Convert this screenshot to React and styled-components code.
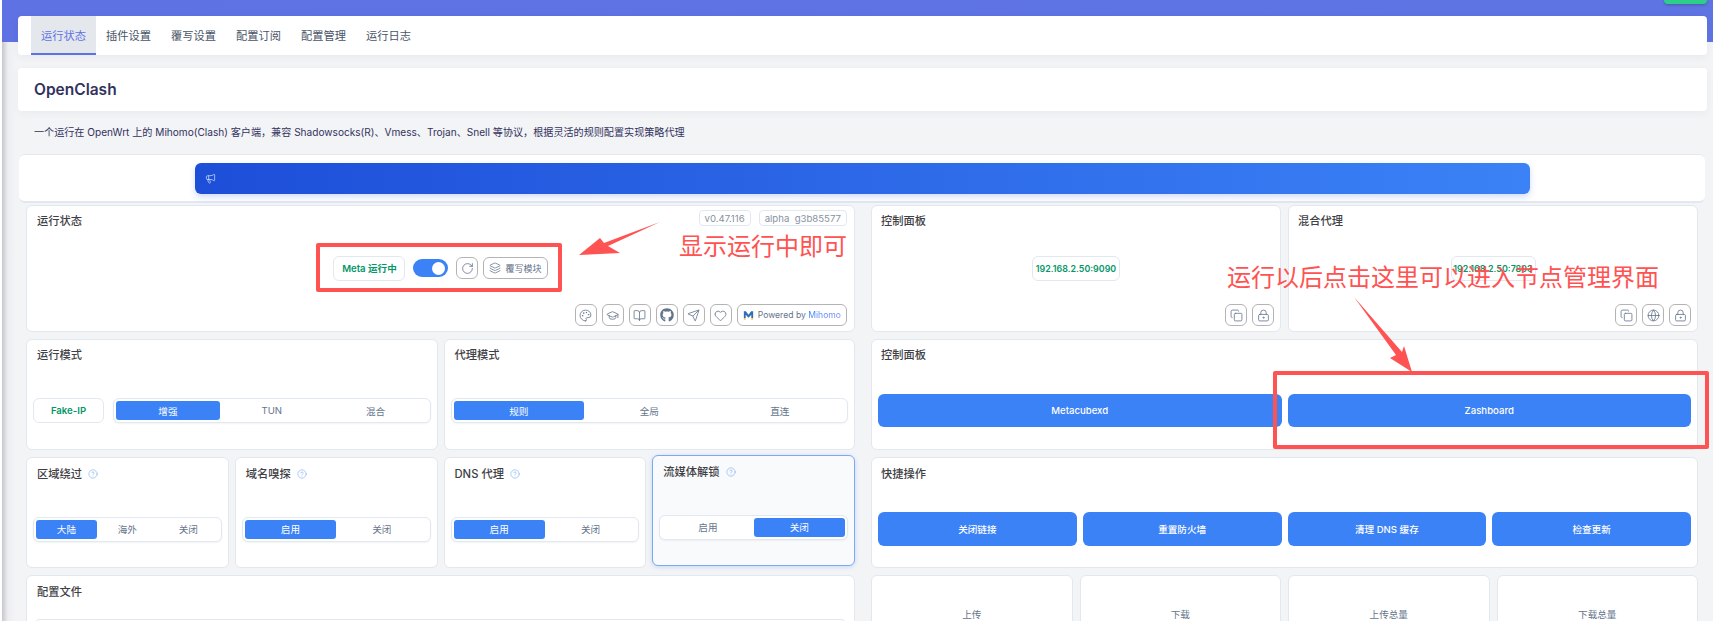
import React from "react";
import styled, { createGlobalStyle } from "styled-components";
import {
  Palette, GraduationCap, BookOpen, Send, Heart, Copy, LockKeyhole, Globe,
  RotateCw, Layers, Megaphone, CircleHelp,
} from "lucide-react";
import { FaGithub } from "react-icons/fa";

const GlobalStyle = createGlobalStyle`
  html, body {
    margin: 0;
    background: #fff;
    overflow: hidden;
  }
  * {
    box-sizing: border-box;
  }
  body {
    font-family: Inter, "Noto Sans CJK SC", sans-serif;
  }
`;

const Page = styled.div`
  position: relative;
  height: 621px;
  margin-left: 2px;
  padding: 16px 6px 0 16px;
  overflow: hidden;
  background:
    linear-gradient(90deg, #5e72e4, #5f74e3) 0 0 / 100% 42px no-repeat,
    linear-gradient(90deg, #c6c8cd 0, #eceef1 6px, #f3f4f6 14px);
`;

const CornerButton = styled.div`
  position: absolute;
  top: 0;
  right: 6px;
  width: 43px;
  height: 4px;
  background: #2dce89;
  border-radius: 0 0 4px 4px;
  box-shadow: 0 1px 3px rgba(0, 0, 0, 0.25);
`;

const Nav = styled.nav`
  display: flex;
  height: 39px;
  padding-left: 13px;
  background: #fff;
  border-radius: 4px;
  box-shadow: 0 2px 8px rgba(50, 50, 93, 0.06);
`;

const Tab = styled.div`
  display: flex;
  align-items: center;
  justify-content: center;
  width: 65px;
  font-size: 11.25px;
  color: ${(p) => (p.$active ? "#5e72e4" : "#4a5568")};
  background: ${(p) => (p.$active ? "#e4e8ed" : "transparent")};
  border-bottom: 2px solid ${(p) => (p.$active ? "#5e72e4" : "transparent")};
`;

const TitleCard = styled.div`
  display: flex;
  align-items: center;
  height: 43px;
  margin-top: 13px;
  padding-left: 16px;
  background: #fff;
  border-radius: 4px;
  box-shadow: 0 2px 8px rgba(50, 50, 93, 0.05);
`;

const AppTitle = styled.h2`
  margin: 0;
  font-size: 15.5px;
  font-weight: 600;
  color: #32325d;
`;

const Description = styled.div`
  display: flex;
  align-items: center;
  height: 43px;
  padding: 0 0 2px 16px;
  font-size: 10.1px;
  color: #32325d;
`;

const NoticeCard = styled.div`
  display: flex;
  align-items: center;
  justify-content: center;
  height: 49px;
  margin: 0 2px 0 1px;
  background: #fff;
  border-radius: 6px;
  border-top: 1px solid #e5e7eb;
  border-bottom: 2px solid #e2e8f0;
`;

const Banner = styled.div`
  display: flex;
  align-items: center;
  width: 1335px;
  height: 31px;
  padding-left: 10px;
  color: #dbe7ff;
  border-radius: 6px;
  background: linear-gradient(90deg, #1d4ed8, #3b82f6);
  box-shadow: 0 3px 6px rgba(29, 78, 216, 0.2);
`;

const Columns = styled.div`
  display: grid;
  grid-template-columns: 829px 827px;
  column-gap: 16px;
  margin-top: 2px;
  padding-left: 8px;
`;

const Column = styled.div`
  display: flex;
  flex-direction: column;
  gap: 7px;
`;

const CardRow = styled.div`
  display: grid;
  grid-template-columns: repeat(${(p) => p.$cols}, 1fr);
  gap: ${(p) => p.$gap || 6}px;
`;

const Card = styled.section`
  display: flex;
  flex-direction: column;
  height: ${(p) => p.$height}px;
  padding: ${(p) => p.$top || 4}px 6px 5px;
  background: ${(p) => (p.$hover ? "#f8fafc" : "#fff")};
  border: 1px solid ${(p) => (p.$hover ? "#7aa9f7" : "#e2e8f0")};
  border-radius: 6px;
  transform: ${(p) => (p.$hover ? "translateY(-2px)" : "none")};
  box-shadow: ${(p) => (p.$hover ? "0 1px 4px rgba(59, 130, 246, 0.25)" : "none")};
`;

const CardHeader = styled.div`
  display: flex;
  justify-content: space-between;
  align-items: flex-start;
  min-height: 22px;
`;

const CardTitle = styled.h3`
  display: flex;
  align-items: center;
  gap: 6px;
  margin: 0;
  padding-left: ${(p) => (p.$indent === undefined ? 4 : p.$indent)}px;
  font-size: 11.25px;
  line-height: 22px;
  font-weight: 500;
  color: #3f3f46;
`;

const Versions = styled.div`
  display: flex;
  gap: 8px;
  padding-right: 1px;
`;

const Version = styled.span`
  display: flex;
  align-items: center;
  height: 16px;
  padding: 0 5px;
  font-size: 9.6px;
  white-space: pre;
  color: #8792a2;
  border: 1px solid #e2e8f0;
  border-radius: 4px;
`;

const CardBody = styled.div`
  flex: 1;
  display: flex;
  align-items: center;
  justify-content: center;
  padding-top: ${(p) => (p.$push ? 11 : 0)}px;
`;

const CardFooter = styled.div`
  display: flex;
  justify-content: flex-end;
  gap: 5px;
  padding-right: ${(p) => (p.$inset ? 1 : 0)}px;
`;

const StatusRow = styled(CardBody)`
  gap: 8px;
`;

const StatusPill = styled.div`
  display: flex;
  align-items: center;
  justify-content: center;
  flex: none;
  width: ${(p) => p.$width}px;
  height: 25px;
  font-size: ${(p) => p.$size || 9.6}px;
  font-weight: 600;
  color: #059669;
  background: #fff;
  border: 1px solid #e2e8f0;
  border-radius: 6px;
`;

const Toggle = styled.div`
  display: flex;
  align-items: center;
  justify-content: flex-end;
  width: 35px;
  height: 18px;
  padding-right: 3px;
  background: #3b82f6;
  border-radius: 9px;
  &::after {
    content: "";
    width: 13px;
    height: 13px;
    background: #fff;
    border-radius: 50%;
  }
`;

const IconButton = styled.div`
  display: inline-flex;
  align-items: center;
  justify-content: center;
  gap: 4px;
  height: 22px;
  min-width: 22px;
  padding: ${(p) => (p.$wide ? "0 5px" : "0")};
  font-size: ${(p) => p.$size || 9}px;
  color: #64748b;
  background: #fff;
  border: 1px solid #b4b4b4;
  border-radius: 6px;
`;

const RefreshButton = styled(IconButton)`
  margin-right: -3px;
`;

const Mihomo = styled.span`
  background: linear-gradient(90deg, #3b82f6, #7c8cf8);
  -webkit-background-clip: text;
  background-clip: text;
  color: transparent;
`;

const ControlGroup = styled.div`
  display: flex;
  flex: 1;
  gap: 9px;
`;

const Segment = styled.div`
  flex: 1;
  display: flex;
  height: 25px;
  padding: 2px;
  background: #fff;
  border: 1px solid #e2e8f0;
  border-radius: 6px;
  box-shadow: 0 1px 2px rgba(15, 23, 42, 0.05);
`;

const SegmentItem = styled.div`
  flex: 1;
  display: flex;
  align-items: center;
  justify-content: center;
  font-size: 9.6px;
  color: ${(p) => (p.$active ? "#fff" : "#64748b")};
  background: ${(p) => (p.$active ? "#3b82f6" : "transparent")};
  border-radius: 3px;
`;

const ActionButton = styled.div`
  flex: 1;
  display: flex;
  align-items: center;
  justify-content: center;
  height: ${(p) => p.$height}px;
  font-size: 9.6px;
  font-weight: 500;
  color: #fff;
  background: #3b82f6;
  border-radius: 6px;
`;

const ButtonGrid = styled.div`
  display: grid;
  flex: 1;
  grid-template-columns: repeat(${(p) => p.$cols}, 1fr);
  gap: 6px;
`;

const InnerBox = styled.div`
  height: 40px;
  margin: 0 1px;
  border: 1px solid #e2e8f0;
  border-radius: 6px 6px 0 0;
`;

const StatCard = styled.section`
  display: flex;
  justify-content: center;
  height: 70px;
  padding-top: 32px;
  font-size: 9.6px;
  line-height: 14px;
  color: #64748b;
  background: #fff;
  border: 1px solid #e2e8f0;
  border-radius: 6px;
`;

const RedBox = styled.div`
  position: absolute;
  left: ${(p) => p.$left}px;
  top: ${(p) => p.$top}px;
  width: ${(p) => p.$width}px;
  height: ${(p) => p.$height}px;
  border: 4px solid #ff5252;
  border-radius: 2px;
`;

const Callout = styled.div`
  position: absolute;
  left: ${(p) => p.$left}px;
  top: ${(p) => p.$top}px;
  font-size: 24px;
  line-height: 1;
  white-space: nowrap;
  color: #ff5252;
  font-family: "Noto Sans CJK SC", sans-serif;
`;

const ArrowLayer = styled.svg`
  position: absolute;
  left: -2px;
  top: 0;
  width: 1713px;
  height: 621px;
  pointer-events: none;
`;

const icon = { size: 13, strokeWidth: 1.5 };

function MihomoLogo() {
  return (
    <svg width="11" height="11" viewBox="0 0 13 12">
      <path d="M1 1h2.4l3.1 4 3.1-4H12v8H9.8V5L6.5 8.6 3.2 5v4H1z" fill="#2f6db5" />
      <path d="M1 9h2.2v2H1zM9.8 9H12v2H9.8z" fill="#f5c56b" />
    </svg>
  );
}

function HelpIcon() {
  return <CircleHelp size={10} strokeWidth={1.5} color="#7fb0f5" />;
}

function SegmentControl({ items, active }) {
  return (
    <Segment>
      {items.map((t) => (
        <SegmentItem key={t} $active={t === active}>{t}</SegmentItem>
      ))}
    </Segment>
  );
}

const tabs = ["运行状态", "插件设置", "覆写设置", "配置订阅", "配置管理", "运行日志"];

const toggles = [
  { title: "区域绕过", items: ["大陆", "海外", "关闭"], active: "大陆" },
  { title: "域名嗅探", items: ["启用", "关闭"], active: "启用" },
  { title: "DNS 代理", items: ["启用", "关闭"], active: "启用" },
  { title: "流媒体解锁", items: ["启用", "关闭"], active: "关闭", hover: true },
];

export default function App() {
  return (
    <Page>
      <GlobalStyle />
      <CornerButton />
      <Nav>
        {tabs.map((t, i) => (
          <Tab key={t} $active={i === 0}>{t}</Tab>
        ))}
      </Nav>
      <TitleCard>
        <AppTitle>OpenClash</AppTitle>
      </TitleCard>
      <Description>
        一个运行在 OpenWrt 上的 Mihomo(Clash) 客户端，兼容 Shadowsocks(R)、Vmess、Trojan、Snell 等协议，根据灵活的规则配置实现策略代理
      </Description>
      <NoticeCard>
        <Banner>
          <Megaphone size={11} strokeWidth={1.5} />
        </Banner>
      </NoticeCard>

      <Columns>
        <Column>
          <Card $height={127}>
            <CardHeader>
              <CardTitle>运行状态</CardTitle>
              <Versions>
                <Version>v0.47.116</Version>
                <Version>alpha  g3b85577</Version>
              </Versions>
            </CardHeader>
            <StatusRow>
              <StatusPill $width={72}>Meta 运行中</StatusPill>
              <Toggle />
              <RefreshButton><RotateCw {...icon} /></RefreshButton>
              <IconButton $wide><Layers size={12} strokeWidth={1.5} />覆写模块</IconButton>
            </StatusRow>
            <CardFooter $inset>
              <IconButton><Palette {...icon} /></IconButton>
              <IconButton><GraduationCap {...icon} /></IconButton>
              <IconButton><BookOpen {...icon} /></IconButton>
              <IconButton><FaGithub size={14} /></IconButton>
              <IconButton><Send {...icon} /></IconButton>
              <IconButton><Heart {...icon} /></IconButton>
              <IconButton $wide $size={8.6}>
                <MihomoLogo />
                <span>Powered by <Mihomo>Mihomo</Mihomo></span>
              </IconButton>
            </CardFooter>
          </Card>

          <CardRow $cols={2}>
            <Card $height={111}>
              <CardHeader><CardTitle>运行模式</CardTitle></CardHeader>
              <CardBody $push>
                <ControlGroup>
                  <StatusPill $width={71}>Fake-IP</StatusPill>
                  <SegmentControl items={["增强", "TUN", "混合"]} active="增强" />
                </ControlGroup>
              </CardBody>
            </Card>
            <Card $height={111}>
              <CardHeader><CardTitle>代理模式</CardTitle></CardHeader>
              <CardBody $push>
                <SegmentControl items={["规则", "全局", "直连"]} active="规则" />
              </CardBody>
            </Card>
          </CardRow>

          <CardRow $cols={4}>
            {toggles.map((c) => (
              <Card key={c.title} $height={111} $top={5} $hover={c.hover}>
                <CardHeader>
                  <CardTitle>{c.title}<HelpIcon /></CardTitle>
                </CardHeader>
                <CardBody $push>
                  <SegmentControl items={c.items} active={c.active} />
                </CardBody>
              </Card>
            ))}
          </CardRow>

          <Card $height={90} $top={5}>
            <CardHeader><CardTitle>配置文件</CardTitle></CardHeader>
            <CardBody $push>
              <ControlGroup />
            </CardBody>
            <InnerBox />
          </Card>
        </Column>

        <Column>
          <CardRow $cols={2} $gap={7}>
            <Card $height={127}>
              <CardHeader><CardTitle $indent={3}>控制面板</CardTitle></CardHeader>
              <CardBody><StatusPill $width={88} $size={8.9}>192.168.2.50:9090</StatusPill></CardBody>
              <CardFooter>
                <IconButton><Copy {...icon} /></IconButton>
                <IconButton><LockKeyhole {...icon} /></IconButton>
              </CardFooter>
            </Card>
            <Card $height={127}>
              <CardHeader><CardTitle $indent={3}>混合代理</CardTitle></CardHeader>
              <CardBody><StatusPill $width={85} $size={8.9}>192.168.2.50:7893</StatusPill></CardBody>
              <CardFooter>
                <IconButton><Copy {...icon} /></IconButton>
                <IconButton><Globe {...icon} /></IconButton>
                <IconButton><LockKeyhole {...icon} /></IconButton>
              </CardFooter>
            </Card>
          </CardRow>

          <Card $height={111}>
            <CardHeader><CardTitle $indent={3}>控制面板</CardTitle></CardHeader>
            <CardBody $push>
              <ButtonGrid $cols={2}>
                <ActionButton $height={33}>Metacubexd</ActionButton>
                <ActionButton $height={33}>Zashboard</ActionButton>
              </ButtonGrid>
            </CardBody>
          </Card>

          <Card $height={111} $top={5}>
            <CardHeader><CardTitle $indent={3}>快捷操作</CardTitle></CardHeader>
            <CardBody $push>
              <ButtonGrid $cols={4}>
                <ActionButton $height={34}>关闭链接</ActionButton>
                <ActionButton $height={34}>重置防火墙</ActionButton>
                <ActionButton $height={34}>清理 DNS 缓存</ActionButton>
                <ActionButton $height={34}>检查更新</ActionButton>
              </ButtonGrid>
            </CardBody>
          </Card>

          <CardRow $cols={4} $gap={7}>
            <StatCard>上传</StatCard>
            <StatCard>下载</StatCard>
            <StatCard>上传总量</StatCard>
            <StatCard>下载总量</StatCard>
          </CardRow>
        </Column>
      </Columns>

      <ArrowLayer viewBox="0 0 1713 621">
        <polygon points="660,222 604,243 600,238 579,255 620,253 608,246" fill="#ff5252" />
        <polygon points="1354,297 1402,352 1404,346 1412,372 1390,358 1396,355" fill="#ff5252" />
      </ArrowLayer>
      <RedBox $left={314} $top={243} $width={246} $height={49} />
      <RedBox $left={1271} $top={371} $width={436} $height={78} />
      <Callout $left={677} $top={233}>显示运行中即可</Callout>
      <Callout $left={1225} $top={264}>运行以后点击这里可以进入节点管理界面</Callout>
    </Page>
  );
}
